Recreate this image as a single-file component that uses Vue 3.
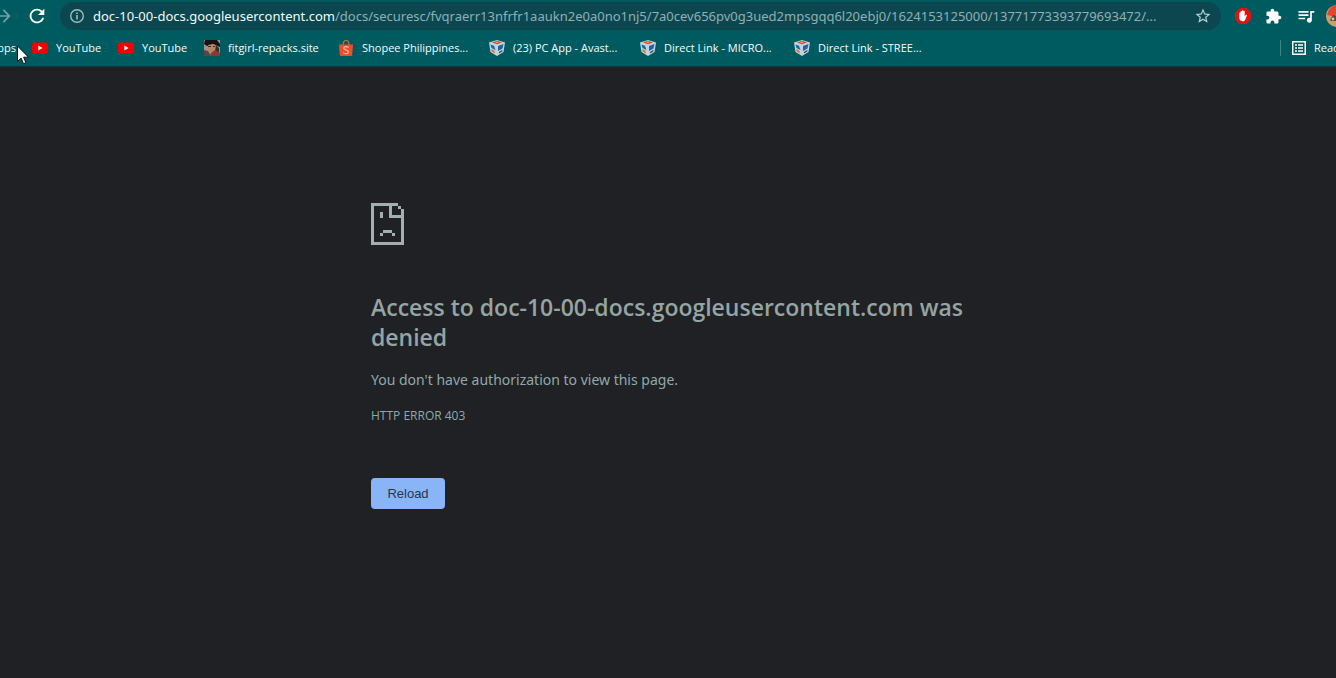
<script setup>
const bookmarks = [
  { icon: 'youtube', label: 'YouTube', size: 'short' },
  { icon: 'youtube', label: 'YouTube', size: 'short' },
  { icon: 'portrait', label: 'fitgirl-repacks.site', size: 'medium' },
  { icon: 'shop', label: 'Shopee Philippines...', size: 'long' },
  { icon: 'cube', label: '(23) PC App - Avast...', size: 'long' },
  { icon: 'cube', label: 'Direct Link - MICRO...', size: 'longest' },
  { icon: 'cube', label: 'Direct Link - STREE...', size: 'long' },
]
const host = 'doc-10-00-docs.googleusercontent.com'
const path =
  '/docs/securesc/fvqraerr13nfrfr1aaukn2e0a0no1nj5/7a0cev656pv0g3ued2mpsgqq6l20ebj0/1624153125000/13771773393779693472/...'
const reload = () => window.location.reload()
</script>

<template>
  <div class="window">
    <header class="chrome">
      <div class="toolbar">
        <button class="tool forward" type="button" aria-label="Forward">
          <svg viewBox="0 0 24 24" width="20" height="20"><path fill="#6fa3a8" d="M12 4l-1.41 1.41L16.17 11H4v2h12.17l-5.58 5.59L12 20l8-8z" /></svg>
        </button>
        <button class="tool" type="button" aria-label="Reload page" @click="reload">
          <svg viewBox="0 0 24 24" width="22" height="22"><path fill="#fff" d="M17.65 6.35C16.2 4.9 14.21 4 12 4c-4.42 0-7.99 3.58-7.99 8s3.57 8 7.99 8c3.73 0 6.84-2.55 7.73-6h-2.08c-.82 2.33-3.04 4-5.65 4-3.31 0-6-2.69-6-6s2.69-6 6-6c1.66 0 3.14.69 4.22 1.78L13 11h7V4l-2.35 2.35z" /></svg>
        </button>
        <div class="omnibox">
          <button class="tool" type="button" aria-label="View site information">
            <svg viewBox="0 0 16 16" width="16" height="16"><circle cx="8" cy="8" r="6.3" fill="none" stroke="#9dbdc3" stroke-width="1.4" /><path fill="#9dbdc3" d="M7.2 7h1.6v4.4H7.2zM7.2 4.4h1.6V6H7.2z" /></svg>
          </button>
          <div class="url" role="textbox" contenteditable="plaintext-only" spellcheck="false" aria-label="Address and search bar"><span class="host">{{ host }}</span><span>{{ path }}</span></div>
          <button class="tool star" type="button" aria-label="Bookmark this page">
            <svg viewBox="0 0 24 24" width="18" height="18"><path fill="#b5d0d3" d="M22 9.24l-7.19-.62L12 2 9.19 8.63 2 9.24l5.46 4.73L5.82 21 12 17.27 18.18 21l-1.63-7.03L22 9.24zM12 15.4l-3.76 2.27 1-4.28-3.32-2.88 4.38-.38L12 6.1l1.71 4.04 4.38.38-3.32 2.88 1 4.28L12 15.4z" /></svg>
          </button>
        </div>
        <div class="extensions">
          <button class="tool" type="button" aria-label="Ad blocker">
            <svg viewBox="0 0 16 16" width="16" height="16"><path fill="#e01313" d="M4.8 0h6.4L16 4.8v6.4L11.2 16H4.8L0 11.2V4.8z" /><path fill="#fff" d="M4.3 5.2c0-.9 1.2-.9 1.2 0V3.6c0-.9 1.3-.9 1.3 0v-.7c0-1 1.5-1 1.5 0v.6c0-.9 1.4-.8 1.4 0v4.7l.8-1c.6-.7 1.7-.3 1.3.6l-1.5 3.6c-.5 1.2-1.2 1.8-2.4 1.8-2.2 0-3.6-1.2-3.6-3.2z" /></svg>
          </button>
          <button class="tool" type="button" aria-label="Extensions">
            <svg viewBox="0 0 24 24" width="17" height="17"><path fill="#fff" d="M20.5 11H19V7c0-1.1-.9-2-2-2h-4V3.5C13 2.12 11.88 1 10.5 1S8 2.12 8 3.5V5H4c-1.1 0-1.99.9-1.99 2v3.8H3.5c1.49 0 2.7 1.21 2.7 2.7s-1.21 2.7-2.7 2.7H2V20c0 1.1.9 2 2 2h3.8v-1.5c0-1.49 1.21-2.7 2.7-2.7 1.49 0 2.7 1.21 2.7 2.7V22H17c1.1 0 2-.9 2-2v-4h1.5c1.38 0 2.5-1.12 2.5-2.5S21.88 11 20.5 11z" /></svg>
          </button>
          <button class="tool" type="button" aria-label="Media controls">
            <svg viewBox="0 0 24 24" width="20" height="20"><path fill="#fff" d="M15 6H3v2h12V6zm0 4H3v2h12v-2zM3 16h8v-2H3v2zM17 6v8.18c-.31-.11-.65-.18-1-.18-1.66 0-3 1.34-3 3s1.34 3 3 3 3-1.34 3-3V8h3V6h-5z" /></svg>
          </button>
          <button class="tool profile" type="button" aria-label="Profile">
            <svg viewBox="0 0 22 22" width="22" height="22"><circle cx="11" cy="11" r="11" fill="#c7a06c" /><path fill="#e2472c" d="M1 10A11 11 0 0 1 11 0v9l-5 2z" /><path fill="#5d4738" d="M4 15l3-5 5 1v5H5z" /><circle cx="7" cy="14" r="1.4" fill="#dfc39a" /></svg>
          </button>
        </div>
      </div>

      <nav class="bookmarks" aria-label="Bookmarks">
        <a class="apps" href="#"><span>Apps</span></a>
        <a v-for="(b, i) in bookmarks" :key="i" class="bookmark" href="#">
          <svg v-if="b.icon === 'youtube'" viewBox="0 0 16 16" width="16" height="16"><rect y="2.4" width="16" height="11.2" rx="2.6" fill="#f60000" /><path fill="#fff" d="M6.3 5.5v5L10.6 8z" /></svg>
          <svg v-else-if="b.icon === 'portrait'" viewBox="0 0 16 16" width="16" height="16"><path fill="#9a9389" d="M0 0h16v16H0z" /><path fill="#171314" d="M1 0h12l3 4v3L9 4 3 6 0 4z" /><path fill="#b98468" d="M4 5l6-1 2 4-2 4-3 1-3-4z" /><path fill="#402a28" d="M4 6h3v1H4zM9 6h2v1H9zM12 5l3 3v5l-4-2z" /><path fill="#8d392d" d="M7 13l4-3 5 3v3H6z" /><path fill="#5b4642" d="M0 10l4 1 3 5H0z" /></svg>
          <svg v-else-if="b.icon === 'shop'" viewBox="0 0 16 16" width="16" height="16"><path fill="none" stroke="#d76a35" stroke-width="1.2" d="M5 5c0-6 6-6 6 0" /><path fill="#ee4d2d" d="M1 4.5h14L14.2 15q-.1 1-1 1H2.8q-.9 0-1-1z" /><path fill="none" stroke="#ffc09a" stroke-width="1.2" d="M10.5 7.5C8.5 6 5.6 6.6 5.8 8.4c.2 1.7 4.7 1.4 4.7 3.5 0 2.1-3.3 2.2-5.2.7" /></svg>
          <svg v-else viewBox="0 0 16 16" width="16" height="16"><path fill="#c3d3dc" d="M8 0l8 2.5-1.5 9.5L8 16l-6.5-4L0 2.5z" /><path fill="#cf4a30" d="M3 2.4L8 .8l5 1.6L8 4.2z" /><path fill="#efb38c" d="M6 2.3l2-.7 1.5.7L8 3z" /><path fill="#1c65a5" d="M9 6l5.5-2-1 4.5L9 11zM1.5 4.5L5 5.8 6.5 10 2.5 8z" /><path fill="#d9772f" d="M2.3 9l3 1.5L6 13.5l-3.4-2z" /><path fill="#204b78" d="M10 12l3.5-2.2-.3 1.7L10 13.5z" /></svg>
          <span :class="b.size">{{ b.label }}</span>
        </a>
        <a class="reading" href="#">
          <svg viewBox="0 0 14 14" width="14" height="14"><path fill="none" stroke="#fff" stroke-width="1.5" d="M.75.75h12.5v12.5H.75z" /><path fill="#fff" d="M3 3.2h2v1.6H3zM6 3.2h5v1.6H6zM3 6.2h2v1.6H3zM6 6.2h5v1.6H6zM3 9.2h2v1.6H3zM6 9.2h5v1.6H6z" /></svg>
          <span>Reading list</span>
        </a>
      </nav>

      <svg class="pointer" viewBox="0 0 12 20" width="12" height="20" aria-hidden="true"><path fill="#fff" stroke="#111" stroke-width="1" d="M.5 1v15.5l3.6-3.4 2.3 5.6 2.5-1-2.3-5.5h4.9z" /></svg>
    </header>

    <main class="page">
      <section class="error">
        <svg class="sad-page" viewBox="0 0 11 14" width="33" height="42" shape-rendering="crispEdges" aria-hidden="true"><path fill="#a3b0af" d="M0 0h9v1H7v3h3V2h1v12H0zM1 1v12h9V5H6V1zM9 1h1v1H9zM3 3h1v2H3zM4 9h3v1H4zM3 10h1v1H3zM7 10h1v1H7z" fill-rule="evenodd" /></svg>
        <h1>Access to {{ host }} was denied</h1>
        <p class="message">You don't have authorization to view this page.</p>
        <p class="code">HTTP ERROR 403</p>
        <button class="reload" type="button" @click="reload">Reload</button>
      </section>
    </main>
  </div>
</template>

<style>
body {
  margin: 0;
  background: #202124;
}
</style>

<style scoped>
.window {
  min-height: 100vh;
  overflow: hidden;
  background: #202124;
  font-family: "Open Sans", "Noto Sans", sans-serif;
}
.chrome {
  position: relative;
  background: #005b60;
  border-bottom: 1px solid #10353b;
}
.toolbar {
  display: flex;
  align-items: center;
  height: 32px;
}
.tool {
  display: flex;
  flex: none;
  padding: 0;
  border: 0;
  background: none;
}
.forward {
  margin: 0 12px 0 -6px;
}
.omnibox {
  display: flex;
  flex: 1;
  align-items: center;
  min-width: 0;
  height: 28px;
  margin-left: 12px;
  padding: 0 9px;
  border-radius: 14px;
  background: #0c474f;
}
.url {
  flex: 1;
  min-width: 0;
  margin-left: 8px;
  overflow: hidden;
  color: #8fb0b5;
  font-family: "Noto Sans", "Open Sans", sans-serif;
  font-size: 13px;
  line-height: 20px;
  white-space: nowrap;
  outline: none;
}
.host {
  color: #f3fafa;
}
.extensions {
  display: flex;
  flex: none;
  align-items: center;
  gap: 14px;
  margin: 0 -12px 0 14px;
}
.profile {
  margin-left: -4px;
}
.bookmarks {
  box-sizing: border-box;
  display: flex;
  align-items: center;
  gap: 16px;
  height: 34px;
  padding-bottom: 2px;
  color: #f6fcfc;
  font-size: 11px;
  line-height: 16px;
  white-space: nowrap;
}
.bookmarks a {
  color: inherit;
  text-decoration: none;
}
.bookmarks svg {
  flex: none;
}
.apps {
  display: flex;
  flex: none;
  justify-content: flex-end;
  width: 16px;
}
.bookmark,
.reading {
  display: flex;
  flex: none;
  align-items: center;
  gap: 8px;
}
.short {
  min-width: 46px;
}
.medium {
  min-width: 94px;
}
.long {
  min-width: 111px;
}
.longest {
  min-width: 114px;
}
.reading {
  width: 44px;
  margin-left: auto;
  padding-left: 11px;
  border-left: 1px solid #3f8488;
}
.pointer {
  position: absolute;
  top: 45px;
  left: 17px;
}
.page {
  padding: 136px 24px 0;
}
.error {
  box-sizing: border-box;
  max-width: 600px;
  margin: 0 auto;
  padding-left: 3px;
  color: #9aa8a8;
}
.sad-page {
  display: block;
}
h1 {
  margin: 47px 0 0;
  color: #94a5a3;
  font-size: 23px;
  font-weight: 600;
  line-height: 30px;
}
.message {
  margin: 18px 0 0;
  color: #8fa9ab;
  font-family: "Noto Sans", "Open Sans", sans-serif;
  font-size: 14px;
  line-height: 20px;
}
.code {
  margin: 17px 0 0;
  color: #8fa9ab;
  font-size: 12px;
  line-height: 18px;
}
.reload {
  min-width: 74px;
  margin-top: 53px;
  padding: 0 16px;
  border: 0;
  border-radius: 4px;
  background: #8ab4f8;
  color: #24384b;
  font-family: "Liberation Sans", Arial, sans-serif;
  font-size: 13px;
  line-height: 31px;
}
</style>
